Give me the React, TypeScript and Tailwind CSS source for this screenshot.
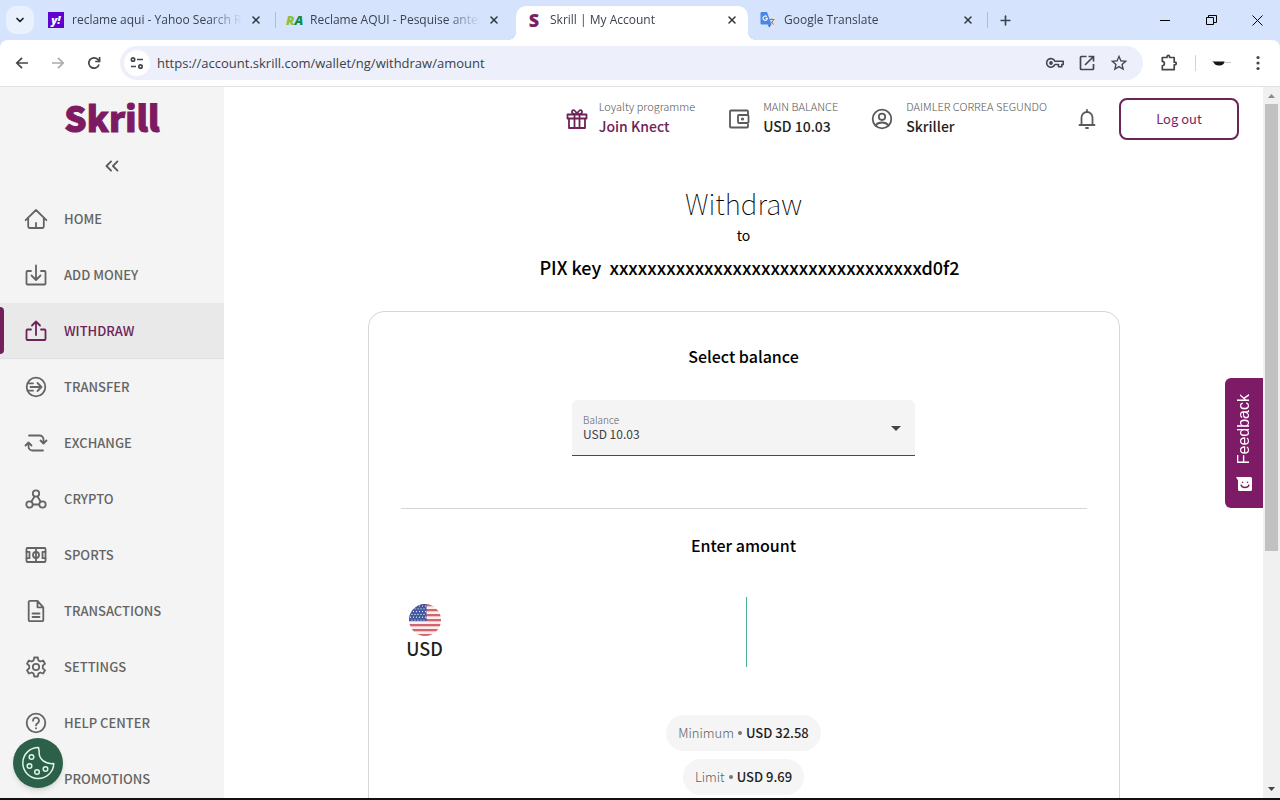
// App.tsx
// Browser window with the wallet's withdraw page open in the active tab.

import type { ReactNode } from "react";
import { ChevronDown, ChevronsLeft, Plus, X } from "lucide-react";
import { MdStarBorder } from "react-icons/md";

type Tab = { title: string; icon: ReactNode; active?: boolean };
type NavItem = { label: string; icon: ReactNode; active?: boolean };

export default function App() {
  return (
    <div className="flex h-screen flex-col overflow-hidden border-b-2 border-[#111] bg-white">
      <TabStrip />
      <Toolbar />
      <div className="relative flex min-h-0 flex-1 font-['Noto_Sans_CJK_SC',sans-serif]">
        <Sidebar />
        <main className="min-w-0 flex-1 overflow-hidden">
          <AccountHeader />
          <Withdraw />
        </main>
        <ScrollBar />
        <FeedbackButton />
        <CookieButton />
      </div>
    </div>
  );
}

/* ---------- browser chrome ---------- */

const TABS: Tab[] = [
  { title: "reclame aqui - Yahoo Search Re", icon: <YahooIcon /> },
  { title: "Reclame AQUI - Pesquise antes", icon: <ReclameIcon /> },
  { title: "Skrill | My Account", icon: <SkrillIcon />, active: true },
  { title: "Google Translate", icon: <TranslateIcon /> },
];

function TabStrip() {
  return (
    <div className="flex h-10 shrink-0 items-center bg-[#d5e3fd] pl-1.5 font-['Open_Sans',sans-serif]">
      <button
        type="button"
        aria-label="Search tabs"
        className="mr-1 grid size-7 shrink-0 place-items-center rounded-[10px] bg-[#e9f1fe]"
      >
        <ChevronDown size={12} strokeWidth={3.4} className="text-[#1f1f1f]" />
      </button>
      {TABS.map((tab, i) => (
        <div
          key={tab.title}
          className={
            tab.active
              ? "relative mx-0.5 flex h-[34px] w-[232px] min-w-0 items-center self-end rounded-t-[10px] bg-white pr-2.5 pb-1.5 pl-2.5"
              : "relative flex h-[34px] w-[238px] min-w-0 items-center self-end pr-3.5 pb-1.5 pl-2.5"
          }
        >
          {tab.active && (
            <>
              <span className="absolute bottom-0 -left-2 size-2 bg-[radial-gradient(circle_at_0_0,transparent_8px,white_8px)]" />
              <span className="absolute -right-2 bottom-0 size-2 bg-[radial-gradient(circle_at_100%_0,transparent_8px,white_8px)]" />
            </>
          )}
          <span className="mr-2 grid size-4 shrink-0 place-items-center">{tab.icon}</span>
          <span className="min-w-0 flex-1 mask-r-from-80% text-[12px] leading-4 whitespace-nowrap text-[#3c4250]">
            {tab.title}
          </span>
          <button type="button" aria-label="Close tab" className="ml-2 shrink-0 text-[#30343c]">
            <X size={12} strokeWidth={3} />
          </button>
          {(i === 0 || i === 3) && <span className="absolute right-0 h-4 w-px bg-[#a9bbe0]" />}
        </div>
      ))}
      <button type="button" aria-label="New tab" className="ml-2.5 text-[#3c4250]">
        <Plus size={15} strokeWidth={2.6} />
      </button>
      <div className="ml-auto flex items-center text-black">
        <button type="button" aria-label="Minimize" className="grid w-[46px] place-items-center">
          <svg width="10" height="10" viewBox="0 0 10 10">
            <path d="M0 5.5h10" stroke="currentColor" />
          </svg>
        </button>
        <button type="button" aria-label="Restore" className="grid w-[46px] place-items-center">
          <svg width="11" height="11" viewBox="0 0 11 11" fill="none" stroke="currentColor">
            <path d="M.5 2.5h7v7h-7zM2.5 2.5V.5h8v7h-3" />
          </svg>
        </button>
        <button type="button" aria-label="Close" className="grid w-[46px] place-items-center">
          <svg width="11" height="11" viewBox="0 0 11 11" stroke="currentColor">
            <path d="M.5.5l10 10M10.5.5l-10 10" />
          </svg>
        </button>
      </div>
    </div>
  );
}

function YahooIcon() {
  return (
    <span className="grid size-4 place-items-center bg-[#5f01d1] text-[11px] leading-4 font-extrabold text-white italic">
      y!
    </span>
  );
}

function ReclameIcon() {
  return (
    <span className="flex text-[13px] leading-4 font-extrabold italic">
      <span className="text-[#8fbe3a]">R</span>
      <span className="text-[#0f8a4b]">A</span>
    </span>
  );
}

function SkrillIcon() {
  return <span className="text-[18px] leading-4 font-extrabold text-[#7b1e63]">S</span>;
}

function TranslateIcon() {
  return (
    <svg width="16" height="16" viewBox="0 0 16 16">
      <path d="M7 4h7.5a1 1 0 0 1 1 1v9.5a1 1 0 0 1-1 1H10z" fill="#dfe3ea" />
      <path d="M9.5 7.5h5M12 6.5v1M13.5 7.5c-.5 2-2 3.500-3.500 4.500M11 9.500c.7 1.200 1.700 2.200 3 3" stroke="#6b7f9c" fill="none" />
      <path d="M1.5 0H7l4.500 12.500H1.500a1 1 0 0 1-1-1V1a1 1 0 0 1 1-1z" fill="#4a86ea" />
      <path d="M8 12.500h3.500L9 15.500z" fill="#2f5fc4" />
      <path d="M6.800 4.600a2.200 2.200 0 1 0 .6 1.700H5.400" stroke="white" strokeWidth="1.100" fill="none" />
    </svg>
  );
}

function Toolbar() {
  return (
    <div className="shrink-0 bg-[#d5e3fd]">
      <div className="flex h-[47px] items-center rounded-t-lg border-b border-[#dfe1e6] bg-white pr-3 pl-3.5 text-[#44474d]">
        <button type="button" aria-label="Back" className="mr-5">
          <ArrowIcon />
        </button>
        <button type="button" aria-label="Forward" className="mr-5 rotate-180 text-[#a9abb0]">
          <ArrowIcon />
        </button>
        <button type="button" aria-label="Reload" className="mr-[18px]">
          <svg width="16" height="16" viewBox="0 0 16 16" fill="none" stroke="currentColor" strokeWidth="1.7">
            <path d="M13 9.500A5.200 5.200 0 1 1 11.800 4.400L13.600 6.200" />
            <path d="M13.600 2v4.500H9.200" />
          </svg>
        </button>
        <div className="flex h-[34px] min-w-0 flex-1 items-center rounded-full bg-[#edf0fa] pr-3.5 pl-1">
          <span className="mr-[7px] grid size-[26px] shrink-0 place-items-center rounded-full bg-white">
            <svg width="14" height="14" viewBox="0 0 14 14" fill="none" stroke="currentColor" strokeWidth="1.7">
              <circle cx="3" cy="3.500" r="1.700" />
              <path d="M7 3.500h6M1 10.500h5" />
              <circle cx="10.500" cy="10.500" r="1.700" />
            </svg>
          </span>
          <input
            type="text"
            aria-label="Address"
            defaultValue="https://account.skrill.com/wallet/ng/withdraw/amount"
            className="min-w-0 flex-1 bg-transparent font-['Open_Sans',sans-serif] text-[13px] leading-5 text-[#3b3f48] outline-none"
          />
          <div className="flex items-center gap-3">
            <svg width="20" height="20" viewBox="0 0 20 20" fill="none" stroke="currentColor" strokeWidth="1.6">
              <path d="M9.900 8.300H18.200v3.200h-1.400v2.300h-3.300v-2.300H9.900A4.300 4.300 0 1 1 9.900 8.300z" strokeLinejoin="round" />
              <circle cx="6" cy="10" r="1.900" fill="currentColor" stroke="none" />
            </svg>
            <svg width="20" height="20" viewBox="0 0 20 20" fill="none" stroke="currentColor" strokeWidth="1.7">
              <path d="M9.500 3.500H4.200a.7.7 0 0 0-.7.7v11.600c0 .4.3.7.7.7h11.600c.4 0 .7-.3.7-.7V11" />
              <path d="M11.500 3.500h5v5M16 4l-8 8" />
            </svg>
            <MdStarBorder size={20} />
          </div>
        </div>
        <button type="button" aria-label="Extensions" className="ml-4">
          <svg width="20" height="20" viewBox="0 0 20 20" fill="none" stroke="currentColor" strokeWidth="1.700" strokeLinejoin="round">
            <path d="M3.300 4.500H8V3.700a1.300 1.300 0 0 1 2.600 0v.8h4.600v4.700h.8a1.300 1.300 0 0 1 0 2.600h-.8v4.900H3.300v-3.900c2.800 0 2.800-4.400 0-4.400z" />
          </svg>
        </button>
        <span className="ml-4 h-4 w-px bg-[#c3d3f1]" />
        <button type="button" aria-label="Profile" className="ml-4">
          <svg width="20" height="20" viewBox="0 0 20 20">
            <path d="M0 8.500h12.500c0 2.500-2.500 4-5.500 4s-4.500-1-5-2.700z" fill="#151515" />
            <path d="M13 9.500h6" stroke="#c9c9c9" />
          </svg>
        </button>
        <button type="button" aria-label="Menu" className="ml-4">
          <svg width="20" height="16" viewBox="0 0 20 16" fill="currentColor">
            <circle cx="10" cy="2.500" r="1.600" />
            <circle cx="10" cy="8" r="1.600" />
            <circle cx="10" cy="13.500" r="1.600" />
          </svg>
        </button>
      </div>
    </div>
  );
}

function ArrowIcon() {
  return (
    <svg width="16" height="16" viewBox="0 0 16 16" fill="none" stroke="currentColor" strokeWidth="1.7">
      <path d="M14 8H3M8 2.800L2.800 8 8 13.200" />
    </svg>
  );
}

function ScrollBar() {
  return (
    <div className="flex w-[17px] shrink-0 flex-col items-center bg-[#f0f0f0]">
      <svg width="17" height="17" viewBox="0 0 17 17">
        <path d="M5 11h7L8.500 7z" fill="#8b8b8b" />
      </svg>
      <div className="h-[447px] w-[13px] bg-[#c1c1c1]" />
      <svg width="17" height="17" viewBox="0 0 17 17" className="mt-auto">
        <path d="M5 6h7l-3.500 4z" fill="#444" />
      </svg>
    </div>
  );
}

/* ---------- sidebar ---------- */

function Icon({ children }: { children: ReactNode }) {
  return (
    <svg
      width="24"
      height="24"
      viewBox="0 0 24 24"
      fill="none"
      stroke="currentColor"
      strokeWidth="1.8"
      strokeLinecap="round"
      strokeLinejoin="round"
      className="shrink-0"
    >
      {children}
    </svg>
  );
}

const NAV: NavItem[] = [
  {
    label: "HOME",
    icon: <path d="M1.600 13.200L12 3l10.400 10.200M4.200 11v8.500A1.500 1.500 0 0 0 5.700 21h12.600a1.500 1.500 0 0 0 1.500-1.500V11M12 21v-5" />,
  },
  {
    label: "ADD MONEY",
    icon: <path d="M7 8H3.500a1 1 0 0 0-1 1v11.500a1 1 0 0 0 1 1h17a1 1 0 0 0 1-1V9a1 1 0 0 0-1-1H17M12 2.500v14M7.500 12.500L12 17l4.500-4.500" />,
  },
  {
    label: "WITHDRAW",
    active: true,
    icon: <path d="M7 10.500H3.500a1 1 0 0 0-1 1v8.500a1 1 0 0 0 1 1h17a1 1 0 0 0 1-1v-8.500a1 1 0 0 0-1-1H17M12 16V3M8 6.500l4-4 4 4" />,
  },
  {
    label: "TRANSFER",
    icon: (
      <>
        <circle cx="12" cy="12" r="9.300" />
        <path d="M4 8.300h5M6.500 12H17M4 15.700h5M13.500 8l4 4-4 4" />
      </>
    ),
  },
  {
    label: "EXCHANGE",
    icon: <path d="M5 4.500h10.500a4 4 0 0 1 4 4V12M16.500 9.500l3 3 3-3M19 19.500H8.500a4 4 0 0 1-4-4V12M1.500 14.500l3-3 3 3" />,
  },
  {
    label: "CRYPTO",
    icon: (
      <>
        <circle cx="12" cy="6.500" r="3.200" />
        <circle cx="5.500" cy="17.500" r="3.200" />
        <circle cx="18.500" cy="17.500" r="3.200" />
        <path d="M10.500 9.500L7.300 14.700M13.500 9.500l3.200 5.200M9 17.500h6" />
      </>
    ),
  },
  {
    label: "SPORTS",
    icon: (
      <>
        <rect x="2.500" y="5" width="19" height="14" rx="1" />
        <path d="M12 5v14M2.500 8.800h3v6.400h-3M21.500 8.800h-3v6.400h3" />
        <circle cx="12" cy="12" r="3" />
      </>
    ),
  },
  {
    label: "TRANSACTIONS",
    icon: <path d="M13.500 1.800H6a1.300 1.300 0 0 0-1.300 1.300v17.800A1.300 1.300 0 0 0 6 22.200h12a1.300 1.300 0 0 0 1.300-1.300V8.300zM13.500 1.800v6.500h5.800M8.500 14.500h7M8.500 18h7" />,
  },
  {
    label: "SETTINGS",
    icon: (
      <>
        <circle cx="12" cy="12" r="3.200" />
        <path d="M10.200 2.500h3.600l.6 2.900 1.900 1.100 2.800-1 1.900 3.200-2.200 1.900v2.800l2.200 1.900-1.900 3.200-2.800-1-1.900 1.100-.6 2.900h-3.600l-.6-2.900-1.900-1.100-2.800 1L3 15.300l2.200-1.900v-2.800L3 8.700l1.900-3.200 2.800 1 1.900-1.100z" />
      </>
    ),
  },
  {
    label: "HELP CENTER",
    icon: (
      <>
        <circle cx="12" cy="12" r="9.300" />
        <path d="M9 9.700a3 3 0 1 1 4.600 2.500c-1 .6-1.600 1-1.600 2.100M12 17.200v.2" />
      </>
    ),
  },
  {
    label: "PROMOTIONS",
    icon: <path d="M4 10v4l12 5V5z" />,
  },
];

function Sidebar() {
  return (
    <aside className="flex w-56 shrink-0 flex-col overflow-hidden bg-[#f4f4f4]">
      <a
        href="#"
        className="mt-1 text-center text-[35px] leading-[52px] font-black text-[#7c1a62] [-webkit-text-stroke:1px_#7c1a62]"
      >
        Skrill
      </a>
      <button type="button" aria-label="Collapse menu" className="mx-auto mt-3 text-[#5a5a5a]">
        <ChevronsLeft size={22} strokeWidth={2} />
      </button>
      <nav className="mt-3.5">
        {NAV.map((item) => (
          <a
            key={item.label}
            href="#"
            className={
              item.active
                ? "relative flex h-14 items-center gap-4 border-b border-[#e0e0e0] bg-[#e9e9e9] pl-6 text-[13px] font-medium text-[#6d2358]"
                : "flex h-14 items-center gap-4 pl-6 text-[13px] font-medium text-[#646464]"
            }
          >
            {item.active && <span className="absolute inset-y-1 left-0 w-1 rounded-r bg-[#731f5b]" />}
            <Icon>{item.icon}</Icon>
            {item.label}
          </a>
        ))}
      </nav>
    </aside>
  );
}

/* ---------- page ---------- */

function AccountHeader() {
  return (
    <header className="flex h-16 items-center justify-end pr-6">
      <a href="#" className="flex items-center gap-2.5 text-[#6d2358]">
        <Icon>
          <path d="M2.500 7.500h19v4h-19zM4 11.500h16v9.500H4zM9.500 7.500V21M14.500 7.500V21M12 7.500C8 7.500 6.500 6 7 4.300c.5-1.800 3.500-2 5 3.200 1.500-5.200 4.500-5 5-3.200.5 1.700-1 3.200-5 3.200z" />
        </Icon>
        <HeaderText label="Loyalty programme" value="Join Knect" />
      </a>
      <div className="ml-8 flex items-center gap-3 text-[#1f1f1f]">
        <span className="text-[#5a5a5a]">
          <Icon>
            <path d="M21 8V4.500a1 1 0 0 0-1-1H4a1 1 0 0 0-1 1v15a1 1 0 0 0 1 1h16a1 1 0 0 0 1-1V16M12 8h8.500a1 1 0 0 1 1 1v6a1 1 0 0 1-1 1H12a1 1 0 0 1-1-1V9a1 1 0 0 1 1-1z" />
            <circle cx="15.500" cy="12" r=".7" />
          </Icon>
        </span>
        <HeaderText label="MAIN BALANCE" value="USD 10.03" />
      </div>
      <div className="ml-8 flex items-center gap-3 text-[#1f1f1f]">
        <span className="text-[#5a5a5a]">
          <Icon>
            <circle cx="12" cy="12" r="9.300" />
            <circle cx="12" cy="9.800" r="3.200" />
            <path d="M5.500 18.500c1.500-2.200 4-3 6.500-3s5 .8 6.500 3" />
          </Icon>
        </span>
        <HeaderText label="DAIMLER CORREA SEGUNDO" value="Skriller" />
      </div>
      <button type="button" aria-label="Notifications" className="ml-7 text-[#5a5a5a]">
        <Icon>
          <path d="M4.500 18h15M6.500 18v-7.500a5.500 5.500 0 0 1 11 0V18M12 4.500V3M11 21h2" />
        </Icon>
      </button>
      <button
        type="button"
        className="ml-5 h-[42px] w-[120px] rounded-lg border-2 border-[#6b2455] text-[13px] text-[#7a1f5f]"
      >
        Log out
      </button>
    </header>
  );
}

function HeaderText({ label, value }: { label: string; value: string }) {
  return (
    <div className="pb-0.5">
      <div className="text-[11px] leading-4 font-light text-[#555]">{label}</div>
      <div className="text-[14px] leading-6 font-medium">{value}</div>
    </div>
  );
}

function Withdraw() {
  return (
    <section className="mx-auto flex max-w-[752px] flex-col items-center pt-8 text-black">
      <h1 className="text-[28px] leading-10 font-thin">Withdraw</h1>
      <p className="text-[14px] leading-6">to</p>
      <p className="mt-2 pl-3 text-[18px] leading-6 font-medium whitespace-pre">
        {"PIX key  xxxxxxxxxxxxxxxxxxxxxxxxxxxxxxxxxd0f2"}
      </p>
      <form className="mt-8 flex h-[600px] w-full flex-col rounded-2xl border border-[#d6d6d6] px-8">
        <h2 className="mt-8 text-center text-[16px] leading-6 font-medium">Select balance</h2>
        <div className="relative mx-auto mt-8 w-1/2">
          <label
            htmlFor="balance"
            className="absolute top-3 left-[11px] text-[10px] leading-4 font-light text-[#606060]"
          >
            Balance
          </label>
          <select
            id="balance"
            className="h-14 w-full appearance-none rounded-t-md border-b border-[#4a4a4a] bg-[#f4f4f4] pt-3 pl-[11px] text-[12px] text-[#404040]"
          >
            <option>USD 10.03</option>
          </select>
          <svg width="10" height="5" viewBox="0 0 10 5" className="pointer-events-none absolute top-[26px] right-3.5">
            <path d="M0 0h10L5 5z" fill="#444" />
          </svg>
        </div>
        <hr className="mt-[52px] border-[#d6d6d6]" />
        <h2 className="mt-6 text-center text-[16px] leading-6 font-medium">Enter amount</h2>
        <div className="relative mt-10 flex h-[70px] items-center">
          <label
            htmlFor="amount"
            className="flex w-12 flex-col items-center text-[18px] leading-6 font-medium text-[#1f1f1f]"
          >
            <FlagUS />
            USD
          </label>
          <input
            id="amount"
            type="text"
            inputMode="decimal"
            className="h-full min-w-0 flex-1 bg-transparent pr-12 text-center text-[48px] font-light outline-none"
          />
          <span className="absolute inset-y-0 left-1/2 ml-0.5 w-px bg-[#4fae97]" />
        </div>
        <div className="mt-12 flex flex-col items-center gap-2">
          <Pill label="Minimum" value="USD 32.58" />
          <Pill label="Limit" value="USD 9.69" />
        </div>
      </form>
    </section>
  );
}

function Pill({ label, value }: { label: string; value: string }) {
  return (
    <div className="flex h-9 items-center gap-1 rounded-full bg-[#f5f5f5] px-3 text-[13px] text-[#606060]">
      <span className="font-light">{label}</span>
      <span className="size-1 rounded-full bg-[#777]" />
      <span className="font-medium text-[#1f1f1f]">{value}</span>
    </div>
  );
}

function FlagUS() {
  const stars: ReactNode[] = [];
  for (let row = 0; row < 6; row++) {
    for (let col = 0; col < 6; col++) {
      stars.push(
        <circle key={`${row}-${col}`} cx={1.5 + col * 3 + (row % 2) * 1.5} cy={2 + row * 2.8} r=".6" fill="white" />,
      );
    }
  }
  return (
    <svg width="32" height="32" viewBox="0 0 32 32">
      <clipPath id="flag-round">
        <circle cx="16" cy="16" r="16" />
      </clipPath>
      <g clipPath="url(#flag-round)">
        <rect width="32" height="32" fill="#fbeeee" />
        {[0, 5, 10, 15, 20, 25, 30].map((y) => (
          <rect key={y} y={y} width="32" height="2.3" fill="#d3656e" />
        ))}
        <rect width="17.5" height="17" fill="#41589f" />
        {stars.filter((_, i) => i % 6 !== 5 || Math.floor(i / 6) % 2 === 0)}
      </g>
    </svg>
  );
}

/* ---------- floating buttons ---------- */

function FeedbackButton() {
  return (
    <button
      type="button"
      className="absolute top-[291px] right-[17px] flex h-[130px] w-[38px] flex-col items-center justify-center gap-3 rounded-l-md bg-[#7d1b67] font-['Liberation_Sans',sans-serif] text-[16px] text-white"
    >
      <span className="rotate-180 leading-5 [writing-mode:vertical-rl]">Feedback</span>
      <svg width="16" height="15" viewBox="0 0 16 15">
        <path d="M0 0h14.500A1.500 1.500 0 0 1 16 1.500v11a1.500 1.500 0 0 1-1.500 1.500h-11A1.500 1.500 0 0 1 2 12.500V3.500z" fill="white" />
        <path d="M5 8c1 3.300 7 3.300 8 0" stroke="#7d1b67" strokeWidth="1.3" fill="none" strokeLinecap="round" />
        <circle cx="6.500" cy="5.300" r=".8" fill="#7d1b67" />
        <circle cx="11.500" cy="5.300" r=".8" fill="#7d1b67" />
      </svg>
    </button>
  );
}

function CookieButton() {
  return (
    <button
      type="button"
      aria-label="Cookie settings"
      className="absolute bottom-2.5 left-[13px] grid size-[50px] place-items-center rounded-full bg-[#2c6049] shadow-md"
    >
      <svg width="34" height="34" viewBox="0 0 34 34" fill="none" stroke="#dff5ea" strokeWidth="1.5" strokeLinejoin="round">
        <path d="M17.500 1.500A15.500 15.500 0 1 0 32.800 17.500C24 18.500 17.500 13 18.200 5.500z" />
        <circle cx="10.500" cy="11" r="2.300" />
        <circle cx="8.500" cy="20" r="2.300" />
        <circle cx="16" cy="26" r="2.300" />
        <circle cx="24.500" cy="23" r="2.300" />
      </svg>
    </button>
  );
}
